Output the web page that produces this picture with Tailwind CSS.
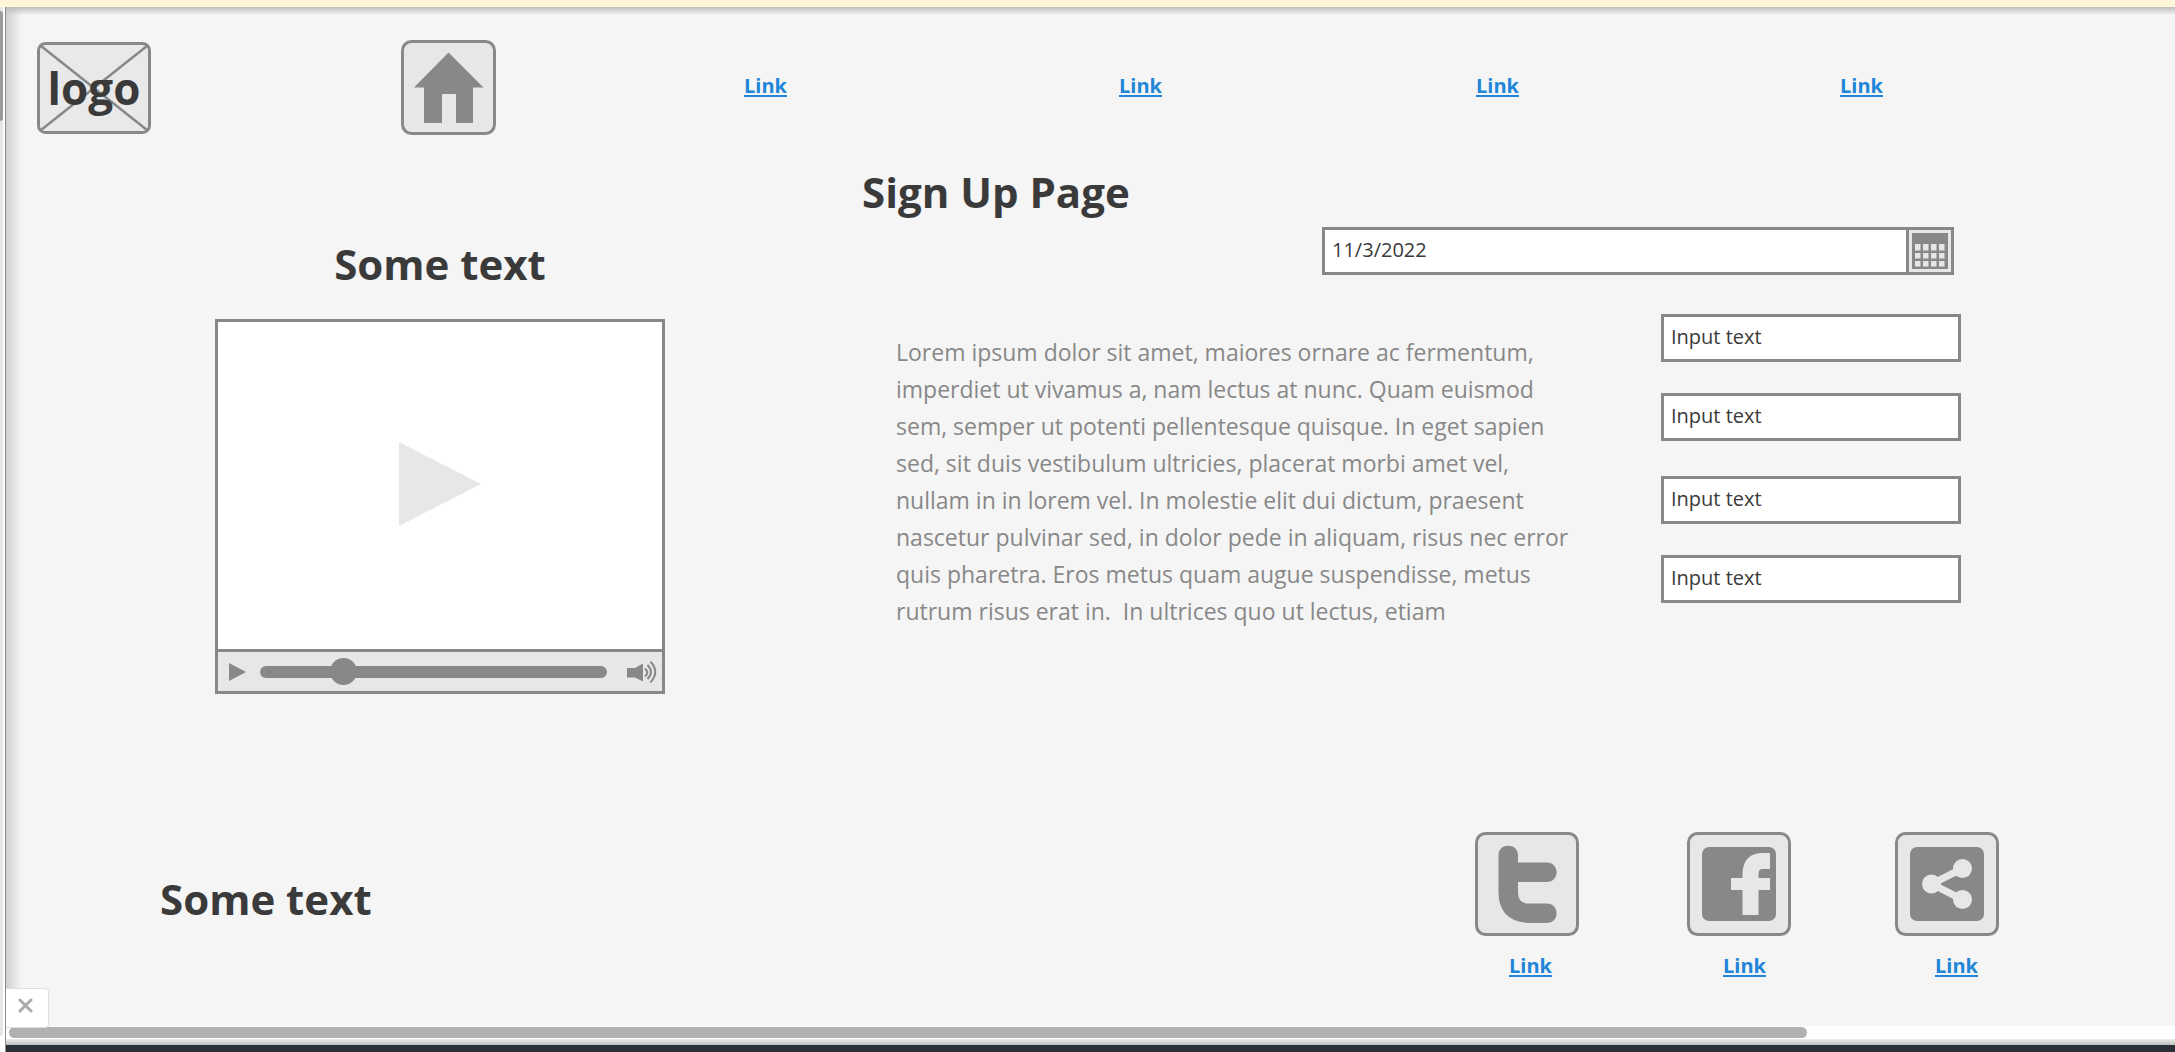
<!DOCTYPE html>
<html lang="en">
<head>
<meta charset="utf-8">
<title>Sign Up Page</title>
<script src="https://cdn.jsdelivr.net/npm/@tailwindcss/browser@4"></script>
</head>
<body class="flex min-h-screen flex-col overflow-x-hidden bg-white font-['Open_Sans',sans-serif] text-[#3a3a3a]">
  <div class="h-[7px] bg-[#fff5d8]"></div>
  <div class="flex grow">
    <!-- outer vertical scrollbar -->
    <div class="flex w-[6px] shrink-0 flex-col border-r border-[#8c8c8c] bg-white">
      <div class="mb-4 grow rounded-br bg-[#e6e6e6] mr-[2px] pt-1">
        <div class="h-[110px] rounded-r bg-[#9a9a9a]"></div>
      </div>
    </div>

    <div class="relative flex min-w-0 grow flex-col">
      <div class="relative flex grow flex-col bg-[#f5f5f5] bg-[linear-gradient(to_bottom,#bdbdbd,transparent_8px),linear-gradient(to_right,#cfcfcf,transparent_16px)]">
        <header class="grid grid-cols-[364fr_343fr_375fr_357fr_364fr_335fr] items-center pt-[33px] pl-[31px]">
          <a href="#" class="relative flex h-[92px] w-[114px] items-center justify-center" aria-label="logo">
            <svg class="absolute inset-0" width="114" height="92" viewBox="0 0 114 92" fill="none" stroke="#888" stroke-width="3"><rect x="1.500" y="1.500" width="111" height="89" rx="7" fill="#e9e9e9"/><path d="M4 4l106 84M110 4L4 88" stroke-width="2.500"/></svg>
            <span class="relative text-[44px] leading-[48px] font-bold">logo</span>
          </a>
          <a href="#" aria-label="Home">
            <svg width="95" height="95" viewBox="0 0 95 95"><rect x="1.500" y="1.500" width="92" height="92" rx="9" fill="#e7e7e7" stroke="#888" stroke-width="3"/><path fill="#888" d="M47.500 12.500L82.500 47.500H72V83H55V54H41V83H23V47.500H13z"/></svg>
          </a>
          <a href="#" class="justify-self-start pb-[3px] text-[20px] leading-6 font-bold text-[#2185d9] underline decoration-2 underline-offset-2">Link</a>
          <a href="#" class="justify-self-start pb-[3px] text-[20px] leading-6 font-bold text-[#2185d9] underline decoration-2 underline-offset-2">Link</a>
          <a href="#" class="justify-self-start pb-[3px] text-[20px] leading-6 font-bold text-[#2185d9] underline decoration-2 underline-offset-2">Link</a>
          <a href="#" class="justify-self-start pb-[3px] text-[20px] leading-6 font-bold text-[#2185d9] underline decoration-2 underline-offset-2">Link</a>
        </header>

        <main class="grid grid-cols-[856fr_1313fr] pt-[31px]">
          <section class="flex flex-col pt-[72px] pl-[209px]">
            <h2 class="w-[450px] text-center text-[42px] leading-[52px] font-bold">Some text</h2>
            <div class="mt-[29px] flex h-[375px] w-[450px] flex-col border-3 border-[#888] bg-white">
              <button type="button" aria-label="Play video" class="flex grow items-center justify-center pb-[3px]">
                <svg width="82" height="84" viewBox="0 0 82 84" fill="#e7e7e7"><path d="M0 0L82 42L0 84z"/></svg>
              </button>
              <div class="flex h-[42px] items-center border-t-3 border-[#888] bg-[#e7e7e7] pl-[11px] pr-[5px]">
                <button type="button" aria-label="Play"><svg width="17" height="18" viewBox="0 0 17 18" fill="#888"><path d="M0 0L17 9L0 18z"/></svg></button>
                <input type="range" aria-label="Seek" min="0" max="100" value="22" class="ml-[14px] h-3 w-[347px] appearance-none rounded-full bg-[#888] [&::-webkit-slider-thumb]:size-[27px] [&::-webkit-slider-thumb]:appearance-none [&::-webkit-slider-thumb]:rounded-full [&::-webkit-slider-thumb]:bg-[#888]">
                <button type="button" aria-label="Volume" class="ml-auto"><svg width="30" height="22" viewBox="0 0 30 22" fill="none" stroke="#888" stroke-width="2"><path fill="#888" stroke="none" d="M0 7H8L16 2.500V20.500L8 16.500H0z"/><path d="M18 7.500q4.500 4 0 8M20.500 4q7 7 0 14M23.500 .800q9.500 10 0 20.500"/></svg></button>
              </div>
            </div>
          </section>

          <section class="flex flex-col">
            <h1 class="text-[42px] leading-[52px] font-bold">Sign Up Page</h1>
            <div class="grid grid-cols-[460fr_632fr_221fr] pt-[9px]">
              <label class="col-start-2 flex h-12 border-3 border-[#888] bg-white">
                <input type="text" aria-label="Date" value="11/3/2022" class="min-w-0 grow px-[7px] pb-[3px] text-[20px] leading-6 outline-none">
                <button type="button" aria-label="Open calendar" class="flex w-[45px] items-center justify-center border-l-3 border-[#888] bg-[#e7e7e7]">
                  <svg width="36" height="36" viewBox="0 0 36 36"><path fill="#888" d="M0 0H36V36H0z"/><path fill="#e7e7e7" d="M3 11h5.500v6.500H3zM11 11h5.500v6.500H11zM19 11h5.500v6.500H19zM27 11h5.500v6.500H27zM3 20h5.500v5.500H3zM11 20h5.500v5.500H11zM19 20h5.500v5.500H19zM27 20h5.500v5.500H27zM3 28h5.500v5.500H3zM11 28h5.500v5.500H11zM19 28h5.500v5.500H19zM27 28h5.500v5.500H27z"/></svg>
                </button>
              </label>
            </div>
            <div class="grid grid-cols-[34px_765fr_514fr] pt-[39px]">
              <p class="col-start-2 pt-5 text-[23px] leading-[37px] font-medium whitespace-pre text-[#888]">Lorem ipsum dolor sit amet, maiores ornare ac fermentum,
imperdiet ut vivamus a, nam lectus at nunc. Quam euismod
sem, semper ut potenti pellentesque quisque. In eget sapien
sed, sit duis vestibulum ultricies, placerat morbi amet vel,
nullam in in lorem vel. In molestie elit dui dictum, praesent
nascetur pulvinar sed, in dolor pede in aliquam, risus nec error
quis pharetra. Eros metus quam augue suspendisse, metus
rutrum risus erat in.  In ultrices quo ut lectus, etiam</p>
              <div class="flex w-[300px] flex-col gap-[35px]">
                <div class="flex flex-col gap-[31px]">
                  <input type="text" aria-label="First field" value="Input text" class="h-12 border-3 border-[#888] bg-white px-[7px] pb-[3px] text-[20px]">
                  <input type="text" aria-label="Second field" value="Input text" class="h-12 border-3 border-[#888] bg-white px-[7px] pb-[3px] text-[20px]">
                </div>
                <div class="flex flex-col gap-[31px]">
                  <input type="text" aria-label="Third field" value="Input text" class="h-12 border-3 border-[#888] bg-white px-[7px] pb-[3px] text-[20px]">
                  <input type="text" aria-label="Fourth field" value="Input text" class="h-12 border-3 border-[#888] bg-white px-[7px] pb-[3px] text-[20px]">
                </div>
              </div>
            </div>
          </section>
        </main>

        <footer class="grid grid-cols-[1469fr_700fr] pt-[138px] pb-[38px]">
          <h2 class="pt-[41px] pl-[154px] text-[42px] leading-[52px] font-bold">Some text</h2>
          <div class="flex flex-col gap-[18px]">
            <div class="grid grid-cols-[212fr_208fr_280fr]">
              <a href="#" aria-label="Twitter"><svg width="104" height="104" viewBox="0 0 104 104"><rect x="1.500" y="1.500" width="101" height="101" rx="9" fill="#e7e7e7" stroke="#888" stroke-width="3"/><path fill="#888" d="M23.500 23C23.500 10.500 43 10.500 43 23V30.500H71.500C85 30.500 85 50 71.500 50H43V60Q43 71.500 53 71.500H71.500C85 71.500 85 91 71.500 91H53Q23.500 89 23.500 60z"/></svg></a>
              <a href="#" aria-label="Facebook"><svg width="104" height="104" viewBox="0 0 104 104"><rect x="1.500" y="1.500" width="101" height="101" rx="9" fill="#e7e7e7" stroke="#888" stroke-width="3"/><rect x="15" y="15" width="74" height="74" rx="7" fill="#888"/><path fill="#e7e7e7" d="M83 21V37H75.500Q71.500 37 71.500 42V46H83V58H71.500V83H55.500V58H44V46H55.500V41Q56.500 21 76 21z"/></svg></a>
              <a href="#" aria-label="Share"><svg width="104" height="104" viewBox="0 0 104 104"><rect x="1.500" y="1.500" width="101" height="101" rx="9" fill="#e7e7e7" stroke="#888" stroke-width="3"/><rect x="15" y="15" width="74" height="74" rx="7" fill="#888"/><path d="M67.500 36.500L36.500 52L67.500 67.500" fill="none" stroke="#e7e7e7" stroke-width="7"/><g fill="#e7e7e7"><circle cx="67.500" cy="36.500" r="9.500"/><circle cx="36.500" cy="52" r="9.500"/><circle cx="67.500" cy="67.500" r="9.500"/></g></svg></a>
            </div>
            <div class="grid grid-cols-[214fr_212fr_240fr] pl-[34px]">
              <a href="#" class="justify-self-start text-[20px] leading-6 font-bold text-[#2185d9] underline decoration-2 underline-offset-2">Link</a>
              <a href="#" class="justify-self-start text-[20px] leading-6 font-bold text-[#2185d9] underline decoration-2 underline-offset-2">Link</a>
              <a href="#" class="justify-self-start text-[20px] leading-6 font-bold text-[#2185d9] underline decoration-2 underline-offset-2">Link</a>
            </div>
          </div>
        </footer>
        <button type="button" aria-label="Close" class="absolute -bottom-[2px] left-0 z-10 flex h-10 w-[43px] items-center justify-center rounded-r border border-l-0 border-[#ddd] bg-white pr-1 pb-1.5">
          <svg width="15" height="15" viewBox="0 0 15 15" stroke="#aaa" stroke-width="3" stroke-linecap="round"><path d="M2 2l11 11M13 2L2 13"/></svg>
        </button>
      </div>

      <!-- horizontal scrollbar and the window edge below it -->
      <div class="h-[13px] bg-white pt-px pl-[3px]">
        <div class="h-[11px] w-[83%] rounded-full bg-[#b0b0b0]"></div>
      </div>
      <div class="h-[6px] bg-linear-to-b from-[#eee] to-[#bdbdbd]"></div>
      <div class="h-[7px] bg-[#2a2e37]"></div>
    </div>
  </div>
</body>
</html>
